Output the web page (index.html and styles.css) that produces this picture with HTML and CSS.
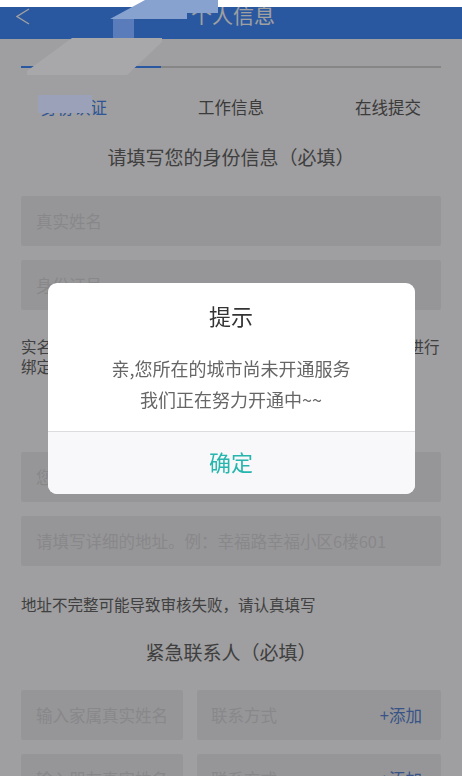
FILE: index.html
```html
<!DOCTYPE html>
<html lang="zh-CN">
<head>
<meta charset="utf-8">
<title>个人信息</title>
<link rel="stylesheet" href="styles.css">
</head>
<body>
<div class="page">
  <header class="nav">
    <span class="nav-back">
      <svg width="16" height="18" viewBox="0 0 16 18"><polyline points="13,1 1,8.5 13,16" fill="none" stroke="#fff" stroke-width="1.4"/></svg>
    </span>
    <h1 class="nav-title">个人信息</h1>
    <span></span>
  </header>

  <div class="steps">
    <div class="progress"><div class="progress-fill"></div></div>
    <div class="tabs">
      <span class="tab tab-active">身份认证</span>
      <span class="tab">工作信息</span>
      <span class="tab">在线提交</span>
    </div>
  </div>

  <main class="form">
    <h2 class="section-title first">请填写您的身份信息（必填）</h2>
    <div class="field"><input class="field-input" placeholder="真实姓名"></div>
    <div class="field gap"><input class="field-input" placeholder="身份证号"></div>
    <p class="note note-id">实名认证信息必须与您本人的银行卡开户信息一致，才能进行绑定，否则将无法通过审核。</p>

    <h2 class="section-title second">请填写您的居住地址（必填）</h2>
    <div class="field"><input class="field-input" placeholder="您的居住城市"></div>
    <div class="field gap"><input class="field-input" placeholder="请填写详细的地址。例：幸福路幸福小区6楼601"></div>
    <p class="note note-addr">地址不完整可能导致审核失败，请认真填写</p>

    <h2 class="section-title third">紧急联系人（必填）</h2>
    <div class="contact-row">
      <div class="field"><input class="field-input" placeholder="输入家属真实姓名"></div>
      <div class="field"><input class="field-input" placeholder="联系方式"><span class="add">+添加</span></div>
    </div>
    <div class="contact-row gap">
      <div class="field"><input class="field-input" placeholder="输入朋友真实姓名"></div>
      <div class="field"><input class="field-input" placeholder="联系方式"><span class="add">+添加</span></div>
    </div>
  </main>
</div>

<div class="mask">
  <div class="dialog">
    <h3 class="dialog-title">提示</h3>
    <p class="dialog-msg">亲,您所在的城市尚未开通服务<br>我们正在努力开通中~~</p>
    <div class="dialog-actions"><button class="dialog-btn">确定</button></div>
  </div>
</div>

<div class="status-strip"></div>

<svg class="smudge" width="462" height="776" viewBox="0 0 462 776">
  <polygon points="110,19 145,0 218,0 218,13 187,13 187,19" fill="#87a2cf"/>
  <rect x="113" y="19" width="21" height="20" fill="#5a7cba"/>
  <polygon points="72,38 162,38 162,42 127,75 27,75 27,71" fill="#a8a8aa"/>
  <rect x="38" y="95" width="54" height="18" fill="#9ca1ba"/>
</svg>
</body>
</html>
```

FILE: styles.css
```css
* { box-sizing: border-box; }

body {
  margin: 0;
  width: 462px;
  height: 776px;
  overflow: hidden;
  background: #fdfcff;
  font-family: "Noto Sans CJK SC", "Noto Sans", sans-serif;
}

.nav {
  height: 39px;
  background: #438cff;
  color: #fff;
  display: grid;
  grid-template-columns: 44px 1fr 44px;
  align-items: start;
}

.nav-back {
  padding: 8px 0 0 16px;
  display: block;
  line-height: 0;
}

.nav-title {
  margin: 0;
  padding: 4px 0 0 4px;
  font-size: 21px;
  font-weight: 400;
  line-height: 20px;
  text-align: center;
}

.steps {
  padding: 27px 21px 0;
}

.progress {
  height: 2px;
  background: #d6d6d6;
}

.progress-fill {
  width: 33.33%;
  height: 100%;
  background: #438cff;
}

.tabs {
  margin-top: 28px;
  padding: 0 20px;
  display: flex;
  justify-content: space-between;
  font-size: 16.5px;
  line-height: 22px;
  color: #5e5e5e;
}

.tab-active { color: #4a8af0; }

.form {
  padding: 0 21px;
  display: flex;
  flex-direction: column;
}

.section-title {
  margin: 0;
  font-size: 19px;
  font-weight: 400;
  line-height: 26px;
  text-align: center;
  color: #656565;
}

.section-title.first { margin: 26px 0 26px; }
.section-title.second { margin: 24px 0 26px; }
.section-title.third { margin: 25px 0 25px; }

.field {
  height: 50px;
  background: #f0eff2;
  border-radius: 2px;
  display: flex;
  align-items: center;
  padding: 0 15px;
}

.field.gap { margin-top: 14px; }

.field-input {
  flex: 1;
  min-width: 0;
  border: 0;
  padding: 0;
  background: transparent;
  font: inherit;
  font-size: 16.5px;
  color: #555;
  outline: none;
}

.field-input::placeholder { color: #d9d8dc; }

.note {
  margin: 0;
  font-size: 15.5px;
  line-height: 20px;
  color: #666;
}

.note-id { margin-top: 26px; }
.note-addr { margin-top: 28px; }

.contact-row {
  display: grid;
  grid-template-columns: 162px 1fr;
  gap: 14px;
}

.contact-row.gap { margin-top: 14px; }

.contact-row .field:last-child { padding: 0 19px 0 14px; }

.add {
  font-size: 16.5px;
  color: #5a86d6;
}

.mask {
  position: fixed;
  inset: 0;
  background: rgba(0, 0, 0, 0.372);
  display: flex;
  align-items: center;
  justify-content: center;
}

.dialog {
  width: 367px;
  background: #fff;
  border-radius: 9px;
  overflow: hidden;
  text-align: center;
}

.dialog-title {
  margin: 0;
  padding-top: 17px;
  font-size: 22px;
  font-weight: 400;
  line-height: 30px;
  color: #333;
}

.dialog-msg {
  margin: 23.5px 0 0;
  padding-bottom: 15.5px;
  font-size: 18px;
  line-height: 31px;
  color: #666;
}

.dialog-actions {
  height: 63px;
  border-top: 1px solid #dcdcdf;
  background: #f8f7fa;
}

.dialog-btn {
  width: 100%;
  height: 100%;
  border: 0;
  background: transparent;
  font: inherit;
  font-size: 22px;
  color: #26b6ae;
  padding: 0 0 4px;
}

.status-strip {
  position: fixed;
  top: 0;
  left: 0;
  right: 0;
  height: 7px;
  background: #fff;
}

.smudge {
  position: fixed;
  top: 0;
  left: 0;
  pointer-events: none;
}
```
